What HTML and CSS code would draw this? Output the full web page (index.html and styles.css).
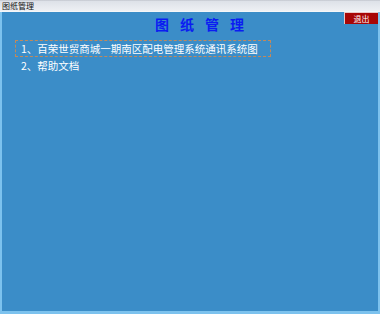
FILE: index.html
```html
<!DOCTYPE html>
<html lang="zh-CN">
<head>
  <meta charset="UTF-8" />
  <title>图纸管理</title>
  <link rel="stylesheet" href="styles.css">
</head>
<body>
  <div class="window">
    <div class="titlebar">图纸管理</div>
    <div class="content">
      <div class="header">
        <h1>图纸管理</h1>
        <button class="exit-btn">退出</button>
      </div>
      <ul class="doc-list">
        <li class="selected">1、百荣世贸商城一期南区配电管理系统通讯系统图</li>
        <li>2、帮助文档</li>
      </ul>
    </div>
  </div>
</body>
</html>
```

FILE: styles.css
```css
* {
  margin: 0;
  padding: 0;
  box-sizing: border-box;
}

body {
  width: 380px;
  height: 314px;
  overflow: hidden;
  font-family: "Noto Sans CJK SC", "DejaVu Sans", sans-serif;
}

.window {
  display: flex;
  flex-direction: column;
  height: 314px;
  background-color: #7cc2ee;
}

/* Title bar */
.titlebar {
  height: 12px;
  line-height: 11px;
  padding-left: 2px;
  font-size: 8px;
  color: #111;
  background: linear-gradient(to bottom, #b8bcc4 0, #dde1e8 1px, #eef0f4 100%);
  border-bottom: 1px solid #f4f6f8;
}

/* Main area */
.content {
  flex: 1;
  margin: 0 2px 3px 2px;
  background-color: #3b8dc8;
  color: #fff;
}

.header {
  display: flex;
  justify-content: center;
  align-items: flex-start;
  position: relative;
  height: 28px;
}

.header h1 {
  margin: 4px 0 0 30px;
  font-size: 14px;
  line-height: 16px;
  letter-spacing: 11px;
  color: #0b1cf2;
  font-weight: bold;
}

.exit-btn {
  position: absolute;
  top: 0;
  right: 0;
  width: 34px;
  height: 12px;
  border: none;
  border-top: 1px solid #e8c8c8;
  border-left: 1px solid #e8c8c8;
  background-color: #a80606;
  color: #fff;
  font-family: inherit;
  font-size: 8px;
  line-height: 10px;
}

.doc-list {
  list-style: none;
  padding-left: 13px;
}

.doc-list li {
  display: block;
  width: 256px;
  height: 17px;
  padding-left: 5px;
  font-size: 10.5px;
  line-height: 15px;
  white-space: nowrap;
  border: 1px solid transparent;
}

.doc-list li.selected {
  border: 1px dashed #c08a5c;
}
```
